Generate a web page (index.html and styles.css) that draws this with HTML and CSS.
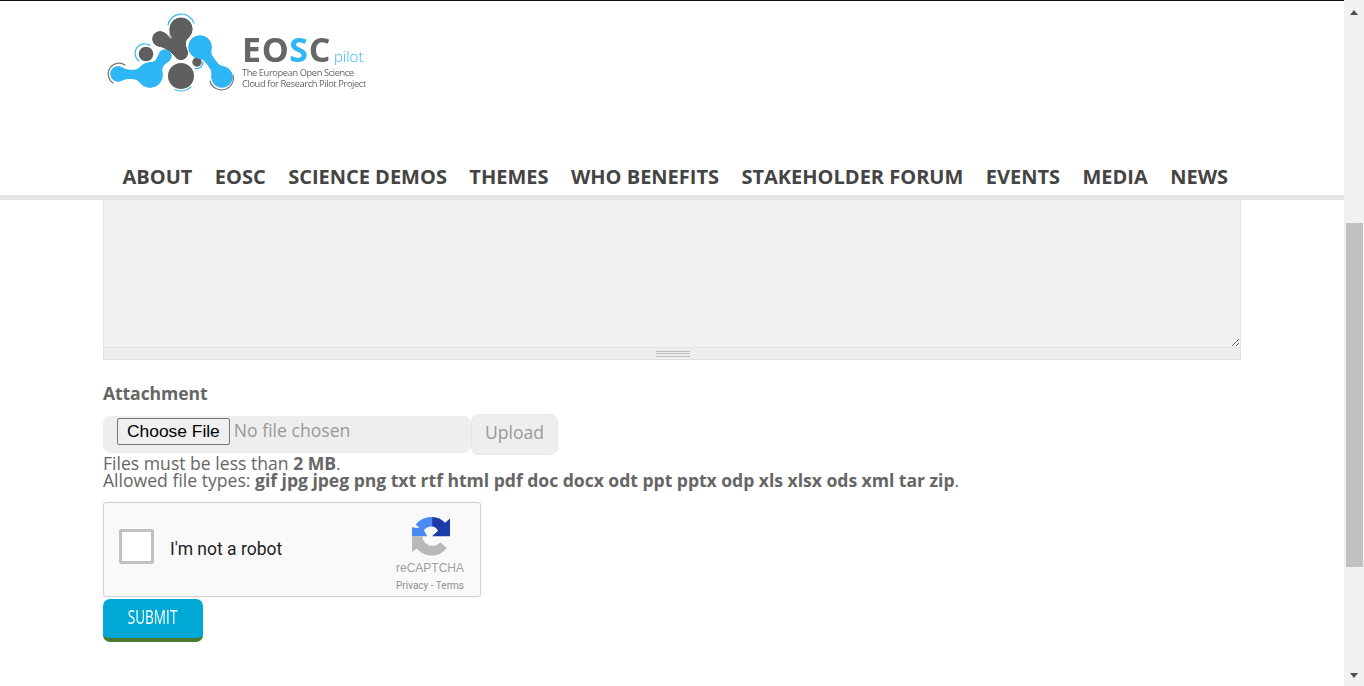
FILE: index.html
```html
<!DOCTYPE html>
<html lang="en">
<head>
<meta charset="utf-8">
<title>EOSCpilot</title>
<link rel="stylesheet" href="styles.css">
</head>
<body>
<div class="viewport">
  <div class="page">
    <header class="site-header">
      <a class="logo">
        <svg class="logo-mark" viewBox="105 10 135 85" width="135" height="85">
          <defs>
            <filter id="goo" x="-10%" y="-10%" width="120%" height="120%">
              <feGaussianBlur stdDeviation="2.500"/>
              <feColorMatrix values="1 0 0 0 0 0 1 0 0 0 0 0 1 0 0 0 0 0 10 -4.500"/>
            </filter>
          </defs>
          <g fill="none" stroke-linecap="round">
            <path class="ring-blue" d="M168 25A13.500 13.500 0 0 1 194 23"/>
            <path class="ring-blue" d="M150 45.500A9.500 9.500 0 0 0 139 61"/>
            <path class="ring-blue" d="M175 89.500A14.500 14.500 0 0 0 191 87"/>
            <path class="ring-blue" d="M203 62A6.500 6.500 0 0 1 195 68.500"/>
            <path class="ring-grey" d="M125 65A10.500 10.500 0 0 0 113 83"/>
            <path class="ring-grey" d="M233 75A11.500 11.500 0 0 1 210 81"/>
          </g>
          <g class="grey goo">
            <circle cx="181" cy="29" r="11.800"/>
            <circle cx="160" cy="39" r="8.200"/>
            <circle cx="181" cy="53" r="7.500"/>
            <path class="neck-grey" d="M160 39L181 53"/>
            <path class="neck-grey" d="M180 33L181 53"/>
          </g>
          <circle class="grey" cx="146" cy="54" r="7.300"/>
          <circle class="grey" cx="181" cy="76" r="13"/>
          <circle class="grey" cx="197" cy="62" r="4.700"/>
          <g class="blue goo">
            <circle cx="118" cy="74" r="8.200"/>
            <circle cx="150" cy="75" r="13"/>
            <circle cx="165" cy="56" r="7.200"/>
            <path class="neck-blue" d="M118 74L150 75"/>
            <path class="neck-blue" d="M150 75L165 56"/>
          </g>
          <g class="blue goo">
            <circle cx="200" cy="47" r="12"/>
            <circle cx="222" cy="77" r="11"/>
            <path class="neck-blue" d="M200 47L222 77"/>
          </g>
        </svg>
        <span class="logo-text">
          <span class="logo-name">EO<span class="logo-blue">S</span>C<span class="logo-pilot">pilot</span></span>
          <span class="logo-sub">The European Open Science</span>
          <span class="logo-sub">Cloud for Research Pilot Project</span>
        </span>
      </a>
      <nav class="main-nav">
        <a>ABOUT</a><a>EOSC</a><a>SCIENCE DEMOS</a><a>THEMES</a><a>WHO BENEFITS</a><a>STAKEHOLDER FORUM</a><a>EVENTS</a><a>MEDIA</a><a>NEWS</a>
      </nav>
    </header>
    <main class="content">
      <div class="message-field">
        <textarea class="message-input" aria-label="Message"></textarea>
        <div class="grippie"><span class="grippie-handle"></span></div>
      </div>
      <h3 class="field-label">Attachment</h3>
      <div class="upload-row">
        <div class="file-box"><input class="file-input" type="file"></div>
        <button class="upload-btn" type="button" disabled>Upload</button>
      </div>
      <p class="help">Files must be less than <strong>2 MB</strong>.<br>Allowed file types: <strong>gif jpg jpeg png txt rtf html pdf doc docx odt ppt pptx odp xls xlsx ods xml tar zip</strong>.</p>
      <div class="recaptcha">
        <span class="rc-check"></span>
        <span class="rc-label">I'm not a robot</span>
        <div class="rc-brand">
          <svg class="rc-icon" viewBox="0 0 35 38.500" width="38" height="39" preserveAspectRatio="none">
            <path class="rc-b" d="M18.500 0C12 0 6.500 3 3.500 7.500L7 11L0 10V19H14L11 13C12.500 11 15 9.500 18.500 9.500Z"/>
            <path class="rc-d" d="M18.500 0C23.500 0 27.500 2.200 30.500 5.700L35 1.500V19H18.500L24 13.500C22.500 11 20.500 9.500 18.500 9.500Z"/>
            <path class="rc-g" d="M0 19H9.500C10 24.500 14 28.500 19 28.500C22 28.500 24.500 27 26 25L32 30.500C28.500 35 24 38 18.500 38C12.500 38 7.500 35 4.500 31L0 34.500Z"/>
          </svg>
          <span class="rc-name">reCAPTCHA</span>
          <span class="rc-links">Privacy - Terms</span>
        </div>
      </div>
      <button class="submit-btn" type="button"><span>SUBMIT</span></button>
    </main>
  </div>
  <div class="scrollbar" aria-hidden="true">
    <span class="arrow-up"></span>
    <span class="thumb"></span>
    <span class="arrow-down"></span>
  </div>
</div>
</body>
</html>
```
FILE: styles.css
```css
* { box-sizing: border-box; }
html, body { margin: 0; height: 100%; overflow: hidden; }
body { font-family: "Open Sans", sans-serif; color: #666; background: #fff; }

.viewport { display: flex; height: 686px; }
.page { flex: 1; min-width: 0; border-top: 1px solid #111; }

/* Header */
.site-header { height: 199px; border-bottom: 5px solid #e4e4e4; padding-left: 103px; }
.logo { display: flex; height: 158px; align-items: flex-start; padding-top: 9px; padding-left: 2px; filter: blur(.35px); }
.logo-mark { display: block; flex: none; }
.grey { fill: #5f5f5f; }
.blue { fill: #2fb6f5; }
.goo { filter: url(#goo); }
.ring-blue { stroke: #2fb6f5; stroke-width: 1.200; }
.ring-grey { stroke: #777; stroke-width: 1.200; }
.neck-grey { fill: none; stroke: #5f5f5f; stroke-width: 10.500; }
.neck-blue { fill: none; stroke: #2fb6f5; stroke-width: 9.500; }
.logo-text { display: flex; flex-direction: column; padding-left: 2px; padding-top: 24px; color: #666; }
.logo-name { font-size: 34px; line-height: 30px; font-weight: 700; letter-spacing: .6px; margin-bottom: 3px; white-space: nowrap; }
.logo-blue { color: #2fb6f5; }
.logo-pilot { font-size: 15px; line-height: 1; font-weight: 300; color: #2fb6f5; letter-spacing: 0; margin-left: 3px; }
.logo-sub { font-size: 9.300px; line-height: 11px; letter-spacing: -.4px; white-space: nowrap; }
.main-nav { display: flex; gap: 22.450px; padding-left: 19.500px; height: 35px; align-items: center; }
.main-nav a { font-size: 20px; font-weight: 700; color: #444; white-space: nowrap; }

/* Form */
.content { padding-left: 103px; width: 1241px; }
.message-field { display: flex; flex-direction: column; }
.message-input { display: block; width: 100%; height: 148px; margin: 0; resize: both; background: #f1f1f1; border: 1px solid #e4e4e4; border-top: 0; outline: 0; }
.grippie { height: 12px; background: #eee; border: 1px solid #e0e0e0; border-top: 0; display: flex; justify-content: center; padding-top: 3px; }
.grippie-handle { display: block; width: 34px; height: 6px; margin-left: 2px; border-top: 1px solid #bbb; border-bottom: 1px solid #bbb; background: linear-gradient(#eee 1px, #bbb 1px, #bbb 2px, #eee 2px); }
.field-label { margin: 20px 0 0; font-size: 17.600px; line-height: 27px; font-weight: 700; letter-spacing: -.1px; color: #666; }
.upload-row { display: flex; align-items: center; margin-top: 7px; }
.file-box { width: 368px; height: 37px; background: #eee; border-radius: 8px; padding: 2px 0 0 14px; }
.file-input { display: block; font-family: "Open Sans", sans-serif; font-size: 17.600px; color: #999; width: 350px; }
.file-input::file-selector-button { font-family: "Liberation Sans", Arial, sans-serif; font-size: 17.400px; color: #000; height: 27px; padding: 0 9px; margin-right: 4px; border: 1px solid #767676; border-radius: 2px; background: #efefef; }
.upload-btn { width: 87px; height: 41px; border: 1px solid #e6e6e6; border-radius: 8px; background: #eee; color: #999; font: 400 17.600px "Open Sans", sans-serif; padding: 0 0 5px; }
.help { margin: 0; font-size: 17.600px; line-height: 17px; color: #666; }
.help strong { font-weight: 700; letter-spacing: -.035px; }
.recaptcha { display: flex; align-items: center; width: 378px; height: 95px; margin-top: 13px; background: #f9f9f9; border: 1px solid #d3d3d3; border-radius: 3px; padding-left: 15px; box-shadow: 0 0 3px rgba(0,0,0,.08); font-family: Roboto, sans-serif; }
.rc-check { flex: none; align-self: flex-start; width: 35px; height: 35px; margin-top: 26px; background: #fff; border: 3px solid #c1c1c1; border-radius: 2px; }
.rc-label { flex: 1; padding: 0 0 1px 16px; font-size: 17.500px; color: #222; white-space: nowrap; }
.rc-brand { flex: none; align-self: flex-start; width: 84px; margin-right: 8px; padding-top: 14px; display: flex; flex-direction: column; align-items: center; }
.rc-icon { display: block; margin-left: 2px; }
.rc-b { fill: #4a8af4; }
.rc-d { fill: #1c3aa9; }
.rc-g { fill: #b9b9b9; }
.rc-name { font-family: "Liberation Sans", Arial, sans-serif; font-size: 12px; line-height: 14px; color: #a0a0a0; margin-top: 5px; }
.rc-links { font-size: 10px; line-height: 12px; color: #8f8f8f; margin-top: 5px; }
.submit-btn { display: flex; align-items: center; justify-content: center; width: 100px; height: 43px; margin-top: 2px; padding: 0 0 5px; background: #00a8d6; border: 0; border-bottom: 4px solid #4a7a2c; border-radius: 7px; color: #fff; font-family: "Open Sans", sans-serif; font-size: 20px; }
.submit-btn span { display: block; transform: scaleX(.68); }

/* Window scrollbar */
.scrollbar { flex: none; width: 20px; height: 686px; background: #f1f1f1; display: flex; flex-direction: column; align-items: flex-start; padding: 10px 1px 0 2px; }
.arrow-up { width: 0; height: 0; margin-left: 4px; border: solid transparent; border-width: 0 4.500px 5px; border-bottom-color: #505050; }
.thumb { width: 17px; height: 344px; margin-top: 208px; background: #c1c1c1; }
.arrow-down { width: 0; height: 0; margin-top: 106px; margin-left: 4px; border: solid transparent; border-width: 5px 4.500px 0; border-top-color: #505050; }
```
